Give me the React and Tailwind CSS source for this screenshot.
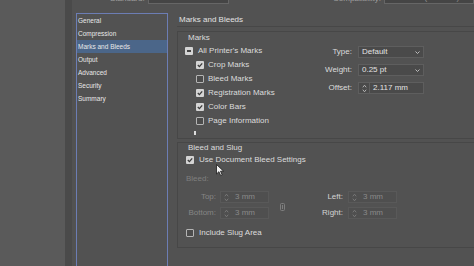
import React from "react";

function Box({ state }) {
  if (state === "checked") {
    return (
      <span className="w-[8px] h-[8px] shrink-0 rounded-[1px] bg-[#d4d4d4] flex items-center justify-center">
        <svg width="6" height="6" viewBox="0 0 6 6">
          <path d="M0.8 3 L2.4 4.6 L5.2 1.3" stroke="#3a3a3a" strokeWidth="1.3" fill="none" />
        </svg>
      </span>
    );
  }
  if (state === "mixed") {
    return (
      <span className="w-[8px] h-[8px] shrink-0 rounded-[1px] bg-[#d4d4d4] flex items-center justify-center">
        <span className="w-[4px] h-[2px] bg-[#444444]" />
      </span>
    );
  }
  return <span className="w-[8px] h-[8px] shrink-0 rounded-[1px] border border-[#b4b4b4] bg-[#4c4c4c]" />;
}

function Chevron() {
  return (
    <svg width="5" height="3" viewBox="0 0 5 3" className="shrink-0">
      <path d="M0.5 0.5 L2.5 2.5 L4.5 0.5" stroke="#c8c8c8" strokeWidth="0.9" fill="none" />
    </svg>
  );
}

function Spin({ color }) {
  return (
    <svg width="5" height="9" viewBox="0 0 5 9">
      <path d="M0.8 3.3 L2.5 1.2 L4.2 3.3 M0.8 5.7 L2.5 7.8 L4.2 5.7" stroke={color} strokeWidth="0.9" fill="none" />
    </svg>
  );
}

const listItems = ["General", "Compression", "Marks and Bleeds", "Output", "Advanced", "Security", "Summary"];

const marks = [
  ["checked", "Crop Marks"],
  ["unchecked", "Bleed Marks"],
  ["checked", "Registration Marks"],
  ["checked", "Color Bars"],
  ["unchecked", "Page Information"],
];

function DisabledField() {
  return (
    <div className="ml-[4px] w-[49px] h-[12px] flex items-center border border-[#595959] bg-[#4f4f4f] text-[#8a8a8a]">
      <span className="w-[11px] flex justify-center">
        <Spin color="#7c7c7c" />
      </span>
      <span className="pl-[3px] leading-none">3 mm</span>
    </div>
  );
}

export default function App() {
  return (
    <div className="relative flex w-[474px] h-[266px] overflow-hidden bg-[#535353] font-['Liberation_Sans',Arial,sans-serif] text-[8px] text-[#dcdcdc]">
      <div className="w-[65px] shrink-0 bg-[#5a5a5a]" />
      <div className="w-[7px] shrink-0 bg-[#4a4a4a]" />
      <div className="flex-1 flex flex-col min-w-0 bg-[#525252]">
        {/* top strip: bottoms of the preset fields */}
        <div className="h-[5px] shrink-0 flex items-end overflow-hidden">
          <span className="ml-[38px] w-[32px] h-[10px] leading-[10px] mb-[1px] text-[#a0a0a0] whitespace-nowrap">Standard:</span>
          <div className="ml-[6px] w-[88px] h-[12px] mb-[1px] border border-[#666666] bg-[#454545] text-[#8e8e8e] pl-[3px] leading-[10px]">None</div>
          <span className="ml-[104px] w-[50px] h-[10px] leading-[10px] mb-[1px] text-[#a0a0a0] whitespace-nowrap">Compatibility:</span>
          <div className="ml-[3px] w-[90px] shrink-0 h-[12px] mb-[1px] border border-[#666666] bg-[#454545] text-[#8e8e8e] pl-[3px] leading-[10px] whitespace-nowrap">Acrobat 5 (PDF 1.4)</div>
        </div>

        <div className="flex flex-1 min-h-0 pt-[8px]">
          {/* list */}
          <div className="ml-[4px] w-[92px] shrink-0 border border-b-0 border-[#6c7db4] flex flex-col">
            {listItems.map((t) => (
              <div
                key={t}
                className={
                  "h-[13px] leading-[13px] pl-[1px] text-[6.5px] text-[#e8e8e8] " +
                  (t === "Marks and Bleeds" ? "bg-[#4b6689]" : "")
                }
              >
                {t}
              </div>
            ))}
          </div>

          {/* content */}
          <div className="flex-1 min-w-0 flex flex-col">
            <div className="pl-[11px] h-[13px] leading-[13px] text-[#e2e2e2]">Marks and Bleeds</div>
            <div className="ml-[9px] h-px bg-[#474747]" />

            {/* Marks group */}
            <div className="ml-[9px] mt-[4px] border-l border-t border-b border-[#474747] pb-[10px]">
              <div className="pl-[10px] h-[11px] leading-[11px]">Marks</div>
              <div className="flex">
                <div className="w-[120px] shrink-0 flex flex-col">
                  <div className="h-[15px] flex items-center pl-[7px] gap-[5px]">
                    <Box state="mixed" />
                    <span>All Printer's Marks</span>
                  </div>
                  {marks.map(([s, t]) => (
                    <div key={t} className="h-[14px] flex items-center pl-[18px] gap-[4px]">
                      <Box state={s} />
                      <span>{t}</span>
                    </div>
                  ))}
                </div>
                <div className="flex flex-col gap-[6px] pt-[3px]">
                  <div className="flex items-center h-[12px]">
                    <span className="w-[54px] text-right">Type:</span>
                    <div className="ml-[6px] w-[66px] h-[12px] flex items-center justify-between border border-[#5e5e5e] bg-[#4a4a4a] pl-[3px] pr-[3px]">
                      <span className="leading-none text-[#e2e2e2]">Default</span>
                      <Chevron />
                    </div>
                  </div>
                  <div className="flex items-center h-[12px]">
                    <span className="w-[54px] text-right">Weight:</span>
                    <div className="ml-[6px] w-[66px] h-[12px] flex items-center justify-between border border-[#5e5e5e] bg-[#4a4a4a] pl-[3px] pr-[3px]">
                      <span className="leading-none text-[#e2e2e2]">0.25 pt</span>
                      <Chevron />
                    </div>
                  </div>
                  <div className="flex items-center h-[12px]">
                    <span className="w-[54px] text-right">Offset:</span>
                    <div className="ml-[6px] w-[66px] h-[12px] flex items-center border border-[#5e5e5e] bg-[#4a4a4a]">
                      <span className="w-[11px] h-full flex items-center justify-center border-r border-[#5e5e5e]">
                        <Spin color="#bdbdbd" />
                      </span>
                      <span className="pl-[3px] leading-none text-[#e2e2e2]">2.117 mm</span>
                    </div>
                  </div>
                </div>
              </div>
            </div>

            {/* Bleed and Slug group */}
            <div className="ml-[9px] mt-[3px] border-l border-t border-b border-[#474747] pb-[7px]">
              <div className="pl-[10px] h-[10px] leading-[10px]">Bleed and Slug</div>
              <div className="h-[14px] flex items-center pl-[8px] gap-[5px]">
                <Box state="checked" />
                <span>Use Document Bleed Settings</span>
              </div>
              <div className="mt-[5px] h-[14px] leading-[14px] pl-[8px] text-[#7f7f7f]">Bleed:</div>
              <div className="mt-[5px] flex">
                <div className="flex flex-col gap-[4px]">
                  <div className="flex items-center h-[12px]">
                    <span className="w-[38px] text-right text-[#858585]">Top:</span>
                    <DisabledField />
                  </div>
                  <div className="flex items-center h-[12px]">
                    <span className="w-[38px] text-right text-[#858585]">Bottom:</span>
                    <DisabledField />
                  </div>
                </div>
                <div className="ml-[11px] self-center pt-[3px]">
                  <svg width="5" height="8" viewBox="0 0 5 8">
                    <rect x="0.5" y="0.5" width="4" height="7" rx="1" stroke="#7e7e7e" fill="none" />
                    <path d="M2.5 2 L2.5 6" stroke="#7e7e7e" />
                  </svg>
                </div>
                <div className="flex flex-col gap-[4px]">
                  <div className="flex items-center h-[12px]">
                    <span className="w-[58px] text-right text-[#d2d2d2]">Left:</span>
                    <div className="ml-[1px]"><DisabledField /></div>
                  </div>
                  <div className="flex items-center h-[12px]">
                    <span className="w-[58px] text-right text-[#d2d2d2]">Right:</span>
                    <div className="ml-[1px]"><DisabledField /></div>
                  </div>
                </div>
              </div>
              <div className="mt-[7px] h-[14px] flex items-center pl-[8px] gap-[5px]">
                <Box state="unchecked" />
                <span>Include Slug Area</span>
              </div>
            </div>
          </div>
        </div>
      </div>

      {/* mouse pointer */}
      <svg className="absolute left-[216px] top-[164px]" width="9" height="13" viewBox="0 0 9 13">
        <path d="M0.5 0.5 L0.5 10 L2.9 7.7 L4.7 11.6 L6.2 10.9 L4.5 7.2 L7.6 7.2 Z" fill="#f2f2f2" stroke="#1a1a1a" strokeWidth="0.8" />
      </svg>
      <span className="absolute left-[194px] top-[131px] w-[2px] h-[4px] bg-[#dcdcdc]" />
    </div>
  );
}
